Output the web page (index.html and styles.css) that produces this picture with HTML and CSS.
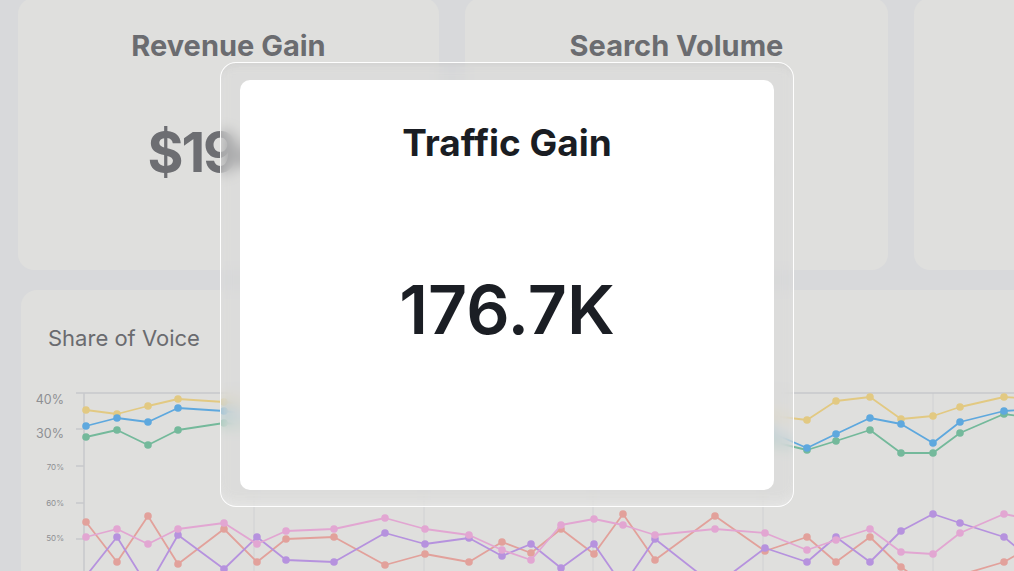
FILE: index.html
```html
<!DOCTYPE html>
<html lang="en">
<head>
<meta charset="utf-8">
<title>Traffic Gain</title>
<link rel="stylesheet" href="styles.css">
</head>
<body>
<div class="page">
  <div class="stats">
    <div class="card stat">
      <h2 class="stat-title">Revenue Gain</h2>
      <div class="stat-value">$194K</div>
    </div>
    <div class="card stat">
      <h2 class="stat-title">Search Volume</h2>
      <div class="stat-value">128.5K</div>
    </div>
    <div class="card stat"></div>
  </div>
  <div class="card chart">
    <h3 class="chart-title">Share of Voice</h3>
    <svg class="chart-svg" width="1000" height="200" viewBox="21 380 1000 200" xmlns="http://www.w3.org/2000/svg">
      <g class="grid">
        <line x1="254" y1="393" x2="254" y2="600"/>
        <line x1="424" y1="393" x2="424" y2="600"/>
        <line x1="593" y1="393" x2="593" y2="600"/>
        <line x1="763" y1="393" x2="763" y2="600"/>
        <line x1="933" y1="393" x2="933" y2="600"/>
      </g>
      <g class="axis">
        <line x1="76" y1="393" x2="1030" y2="393"/>
        <line x1="84" y1="393" x2="84" y2="600"/>
        <line x1="76" y1="429" x2="84" y2="429"/>
        <line x1="76" y1="466" x2="84" y2="466"/>
        <line x1="76" y1="503" x2="84" y2="503"/>
        <line x1="76" y1="539" x2="84" y2="539"/>
      </g>
      <g class="labels">
        <text class="lbl-lg" x="64" y="404">40%</text>
        <text class="lbl-lg" x="64" y="438">30%</text>
        <text class="lbl-sm" x="64" y="470">70%</text>
        <text class="lbl-sm" x="64" y="506">60%</text>
        <text class="lbl-sm" x="64" y="541">50%</text>
      </g>
      <g id="series"></g>
    </svg>
  </div>
</div>

<div class="overlay">
  <div class="modal-frame">
    <div class="modal-card">
      <h1 class="modal-title">Traffic Gain</h1>
      <div class="modal-value">176.7K</div>
    </div>
  </div>
</div>
<script src="chart.js"></script>
</body>
</html>
```

FILE: chart.js
```js
(function () {
  var X = [86,117,148,178,224,257,286,334,385,425,469,502,531,561,594,623,655,715,765,807,836,870,901,933,960,1004,1034];
  var series = [
    { c: '#e2c982', y: [410,414,406,399,402,405,410,404,400,408,412,406,400,398,405,410,415,411,415,420,401,397,419,416,407,397,399] },
    { c: '#74b99b', y: [437,430,445,430,423,426,432,428,422,430,436,430,425,422,428,434,438,436,440,450,441,430,453,453,433,414,418] },
    { c: '#5ea8de', y: [426,418,422,408,411,415,420,414,410,418,424,418,412,410,416,422,428,424,430,448,434,418,424,443,422,411,409] },
    { c: '#e2a19b', y: [522,562,516,564,529,562,539,537,565,554,562,542,553,529,554,514,560,516,551,537,562,537,567,590,575,562,545] },
    { c: '#b692de', y: [576,537,587,535,569,537,560,562,533,544,538,556,544,568,544,586,539,586,548,562,537,562,531,514,523,537,562] },
    { c: '#e2a6d2', y: [537,529,544,529,523,544,531,529,518,529,535,550,560,525,519,525,535,529,533,550,540,529,552,554,533,514,520] }
  ];
  var ns = 'http://www.w3.org/2000/svg';
  var g = document.getElementById('series');
  series.forEach(function (s) {
    var pts = X.map(function (x, i) { return x + ',' + s.y[i]; }).join(' ');
    var pl = document.createElementNS(ns, 'polyline');
    pl.setAttribute('points', pts);
    pl.setAttribute('fill', 'none');
    pl.setAttribute('stroke', s.c);
    pl.setAttribute('stroke-width', '1.8');
    pl.setAttribute('stroke-linejoin', 'round');
    g.appendChild(pl);
    X.forEach(function (x, i) {
      var c = document.createElementNS(ns, 'circle');
      c.setAttribute('cx', x);
      c.setAttribute('cy', s.y[i]);
      c.setAttribute('r', '3.8');
      c.setAttribute('fill', s.c);
      g.appendChild(c);
    });
  });
})();
```

FILE: styles.css
```css
* { box-sizing: border-box; }

html, body {
  margin: 0;
  padding: 0;
  width: 1014px;
  height: 571px;
  overflow: hidden;
}

body {
  background: #d8d9db;
  font-family: Inter, "Noto Sans", "Liberation Sans", sans-serif;
}

.page {
  padding-left: 18px;
  margin-top: -2px;
}

.stats {
  display: grid;
  grid-template-columns: 421px 423px 421px;
  column-gap: 26px;
}

.card {
  background: #dfdfdd;
  border-radius: 16px;
}

.stat {
  height: 272px;
  display: flex;
  flex-direction: column;
  align-items: center;
  padding-top: 31px;
}

.stat-title {
  margin: 0;
  font-size: 29px;
  line-height: 34px;
  font-weight: 700;
  color: #6b6c70;
}

.stat-value {
  margin-top: 56px;
  font-size: 55px;
  line-height: 66px;
  font-weight: 700;
  letter-spacing: -2px;
  color: #6d6e72;
}

.chart {
  margin-top: 20px;
  margin-left: 3px;
  width: 1100px;
  height: 320px;
  overflow: hidden;
}

.chart-title {
  margin: 0;
  padding: 35px 0 0 27px;
  font-size: 22px;
  line-height: 26px;
  font-weight: 400;
  color: #6a6b6f;
}

.chart-svg {
  display: block;
  margin-top: 29px;
}

.grid line {
  stroke: #d0d1d3;
  stroke-width: 1;
}

.axis line {
  stroke: #c7c8cb;
  stroke-width: 1.5;
}

.labels text {
  font-family: Inter, "Noto Sans", sans-serif;
  text-anchor: end;
  fill: #8e8f93;
}

.lbl-lg { font-size: 12.5px; }
.lbl-sm { font-size: 8px; fill: #939498; }

.overlay {
  position: absolute;
  left: 0;
  top: 0;
  width: 1014px;
  height: 571px;
}

.modal-frame {
  position: absolute;
  left: 220px;
  top: 62px;
  width: 574px;
  height: 445px;
  padding: 17px 19px 16px;
  border: 1px solid rgba(255, 255, 255, 0.95);
  border-radius: 16px;
  background: rgba(214, 215, 215, 0.35);
  -webkit-backdrop-filter: blur(7px);
  backdrop-filter: blur(7px);
  box-shadow: inset 0 8px 10px -6px rgba(0, 0, 0, 0.05), inset 0 -10px 14px -8px rgba(255, 255, 255, 0.35);
}

.modal-card {
  height: 100%;
  background: #ffffff;
  border-radius: 10px;
  display: flex;
  flex-direction: column;
  align-items: center;
  padding-top: 41px;
}

.modal-title {
  margin: 0;
  font-size: 37px;
  line-height: 44px;
  font-weight: 700;
  color: #1a1d23;
}

.modal-value {
  margin-top: 104px;
  font-size: 68px;
  line-height: 80px;
  font-weight: 600;
  color: #1b1e24;
}
```
